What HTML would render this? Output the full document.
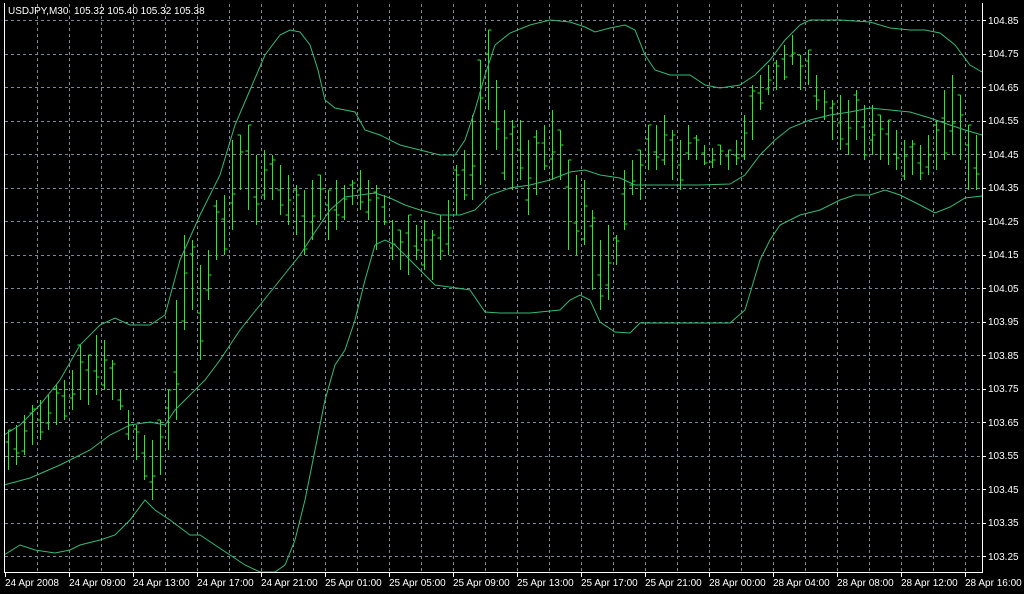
<!DOCTYPE html>
<html><head><meta charset="utf-8"><style>
html,body{margin:0;padding:0;background:#000;width:1024px;height:594px;overflow:hidden}
svg{position:absolute;left:0;top:0}
text{font-family:"Liberation Sans","DejaVu Sans",sans-serif;font-size:10px;fill:#fff;white-space:pre}
</style></head><body>
<svg id="s" width="1024" height="594" xmlns="http://www.w3.org/2000/svg">
<g id="grid" stroke="#7a8a9a" stroke-width="1" stroke-dasharray="3,3"></g>
<g id="bars" stroke="#22ee22" stroke-width="1"></g>
<g fill="none" stroke="#33bb77" stroke-width="1">
<polyline points="4,435 20,425 40,405 60,380 80,345 100,325 115,318 130,325 150,325 165,315 180,260 200,215 220,175 235,125 250,90 265,55 280,35 290,30 300,32 310,45 318,70 325,100 335,108 355,112 365,130 380,135 400,145 420,150 440,155 455,155 465,140 475,110 485,75 495,45 510,33 530,25 550,20 570,22 585,27 595,32 610,28 625,25 635,30 645,55 655,70 670,75 690,75 705,85 720,88 740,85 755,75 770,60 785,40 800,25 810,20 840,20 870,22 890,28 910,30 925,30 940,33 955,45 970,65 982,72"/>
<polyline points="4,485 30,478 60,465 90,450 110,435 130,425 150,422 165,425 175,410 190,395 205,380 220,360 240,330 260,305 280,280 300,255 315,232 330,210 345,197 360,195 375,193 390,198 405,205 420,210 440,215 460,215 475,210 490,195 510,188 530,185 550,180 570,172 585,170 600,175 620,178 635,185 650,185 670,185 700,185 730,184 745,175 760,155 775,140 790,128 810,120 830,115 850,112 870,108 890,110 910,112 930,118 950,125 965,130 982,135"/>
<polyline points="4,555 20,545 35,550 55,553 70,550 80,545 100,540 115,535 130,520 145,500 155,510 170,520 190,535 200,535 215,545 230,555 245,565 260,572 275,572 285,565 295,540 305,500 315,450 325,400 335,365 345,350 355,320 365,280 375,245 385,240 395,245 405,255 420,270 435,285 450,287 470,290 485,312 500,313 530,313 560,310 570,300 580,295 590,300 600,322 615,332 630,333 640,323 660,323 700,323 730,323 745,310 760,260 770,240 780,225 800,215 820,210 840,200 855,195 870,195 885,190 900,195 920,205 935,213 950,207 965,198 982,196"/>
</g>
<g stroke="#fff" stroke-width="1" fill="none">
<line x1="4.5" y1="3" x2="4.5" y2="572.5"/>
<line x1="982.5" y1="3" x2="982.5" y2="572.5"/>
<line x1="4" y1="572.5" x2="983" y2="572.5"/>
</g>
<g id="ticks" stroke="#fff"></g>
<text x="8" y="14" xml:space="preserve">USDJPY,M30  105.32 105.40 105.32 105.38</text>
<g id="yl">
<text x="988" y="24">104.85</text><text x="988" y="57">104.75</text><text x="988" y="91">104.65</text><text x="988" y="124">104.55</text><text x="988" y="158">104.45</text><text x="988" y="191">104.35</text><text x="988" y="225">104.25</text><text x="988" y="258">104.15</text><text x="988" y="292">104.05</text><text x="988" y="325">103.95</text><text x="988" y="359">103.85</text><text x="988" y="392">103.75</text><text x="988" y="426">103.65</text><text x="988" y="459">103.55</text><text x="988" y="493">103.45</text><text x="988" y="526">103.35</text><text x="988" y="560">103.25</text>
</g>
<g>
<text x="5" y="586">24 Apr 2008</text><text x="69" y="586">24 Apr 09:00</text><text x="133" y="586">24 Apr 13:00</text><text x="197" y="586">24 Apr 17:00</text><text x="261" y="586">24 Apr 21:00</text><text x="325" y="586">25 Apr 01:00</text><text x="389" y="586">25 Apr 05:00</text><text x="453" y="586">25 Apr 09:00</text><text x="517" y="586">25 Apr 13:00</text><text x="581" y="586">25 Apr 17:00</text><text x="645" y="586">25 Apr 21:00</text><text x="709" y="586">28 Apr 00:00</text><text x="773" y="586">28 Apr 04:00</text><text x="837" y="586">28 Apr 08:00</text><text x="901" y="586">28 Apr 12:00</text><text x="965" y="586">28 Apr 16:00</text>
</g>
</svg>
<script>
var NS="http://www.w3.org/2000/svg";
function L(g,x1,y1,x2,y2){var l=document.createElementNS(NS,"line");l.setAttribute("x1",x1);l.setAttribute("y1",y1);l.setAttribute("x2",x2);l.setAttribute("y2",y2);document.getElementById(g).appendChild(l);}
for(var k=0;k<17;k++){var y=Math.round(20+33.5*k)+0.5;L("grid",5,y,982,y);L("ticks",982,y,986,y);}
for(var x=37;x<982;x+=32){L("grid",x+0.5,4,x+0.5,572);}
for(var x=5;x<982;x+=64){L("ticks",x+0.5,573,x+0.5,577);}
var b=[[430,470],[425,465],[415,455],[405,445],[400,440],[395,430],[385,425],[380,420],[370,410],[345,400],[355,405],[335,395],[340,390],[360,400],[390,410],[410,440],[425,460],[435,480],[440,500],[420,475],[390,450],[300,420],[235,330],[240,310],[265,360],[250,300],[200,260],[195,255],[140,230],[135,190],[125,210],[155,225],[150,200],[155,200],[165,215],[175,225],[185,235],[190,255],[180,240],[175,220],[190,240],[180,230],[185,220],[180,205],[170,210],[180,220],[185,250],[195,225],[220,260],[230,270],[215,275],[225,260],[220,270],[230,280],[215,260],[200,255],[165,215],[150,200],[115,200],[60,185],[30,110],[80,150],[110,180],[120,190],[120,180],[140,215],[130,195],[125,170],[110,180],[130,180],[160,250],[175,255],[180,245],[210,290],[240,310],[225,300],[235,265],[170,230],[160,195],[150,200],[125,170],[125,170],[115,165],[130,180],[140,190],[125,160],[135,160],[145,165],[148,168],[145,165],[150,170],[140,165],[115,160],[85,140],[75,110],[65,95],[60,90],[45,80],[35,65],[55,90],[50,85],[75,110],[90,120],[100,140],[95,150],[100,155],[90,140],[105,160],[105,155],[115,160],[120,165],[130,170],[140,180],[140,175],[145,180],[135,175],[120,170],[90,160],[75,155],[95,160],[125,190],[135,190]];
for(var i=0;i<b.length;i++){var x=8+8*i+0.5,h=b[i][0],l=b[i][1];L("bars",x,h,x,l);var c=Math.round(h+(l-h)*((i*37)%10)/10);L("bars",x,c,x+3,c);var o=Math.round(h+(l-h)*((i*53+3)%10)/10);L("bars",x-3,o,x,o);}
</script>
</body></html>
